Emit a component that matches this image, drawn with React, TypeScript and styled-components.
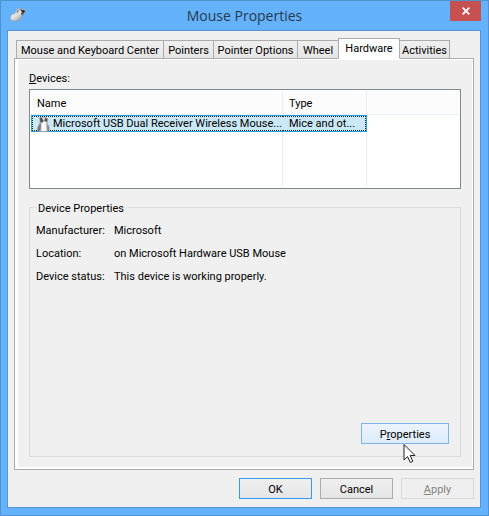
import React from 'react';
import styled, { createGlobalStyle, css } from 'styled-components';

const GlobalStyle = createGlobalStyle`
  *, *::before, *::after { box-sizing: border-box; }
  body { margin: 0; }
  body, button, table { font-family: Roboto, "Liberation Sans", Arial, sans-serif; font-size: 11px; line-height: 14px; color: #000; }
`;

const Window = styled.main`
  display: flex;
  flex-direction: column;
  min-height: 100vh;
  padding: 0 7px 7px 6px;
  background: #65b2fc;
  border: 1px solid #4e92cf;
`;

const TitleBar = styled.header`
  display: flex;
  align-items: flex-start;
  height: 29px;
`;

const TitleIcon = styled.svg`
  flex: none;
  width: 18px;
  height: 16px;
  margin: 6px 0 0 2px;
`;

const Title = styled.h1`
  flex: 1;
  margin: 0;
  padding: 4px 0 0 12px;
  font: 400 14px/22px "Open Sans", sans-serif;
  color: #25394d;
  text-align: center;
`;

const CloseButton = styled.button`
  display: grid;
  place-items: center;
  width: 31px;
  height: 20px;
  padding: 0;
  border: 0;
  background: #c75050;
`;

const Client = styled.div`
  display: flex;
  flex: 1;
  flex-direction: column;
  padding: 7px 6px 8px;
  background: #f0f0f0;
  border: 1px solid #5496d6;
`;

const TabList = styled.div`
  display: flex;
  align-items: flex-end;
  height: 21px;
  margin-bottom: -1px;
  padding-left: 2px;
`;

const Tab = styled.button<{ $width: number }>`
  width: ${p => p.$width}px;
  height: 19px;
  margin-right: -1px;
  padding: 2px 0 0;
  border: 1px solid #acacac;
  background: linear-gradient(#f0f0f0, #e5e5e5);
  text-align: center;
  white-space: nowrap;
  &[aria-selected='true'] {
    position: relative;
    height: 21px;
    padding-bottom: 1px;
    border-bottom-color: #fff;
    background: #fff;
  }
`;

const TabPanel = styled.section`
  display: flex;
  flex: 1;
  flex-direction: column;
  padding: 13px 12px 12px 14px;
  background: #f0f0f0;
  border: 1px solid #acacac;
  box-shadow: inset 3px 0 #fff, inset -1px 0 #fff, inset 0 1px #fff, inset 0 -2px #fff;
`;

const ListLabel = styled.div`
  height: 17px;
`;

const ListBox = styled.div`
  height: 100px;
  padding: 1px;
  border: 1px solid #828790;
  background: #fff;
`;

const DeviceTable = styled.table`
  width: 100%;
  height: 100%;
  table-layout: fixed;
  border-collapse: separate;
  border-spacing: 0;
`;

const NameCol = styled.col`width: 252px;`;
const TypeCol = styled.col`width: 84px;`;

const HeadCell = styled.th`
  height: 24px;
  padding: 3px 6px 0;
  border-right: 1px solid #e5f0fb;
  border-bottom: 1px solid #e5f0fb;
  background: #fcfcfc;
  font-weight: 400;
  text-align: left;
  &:last-child { border-right: 0; }
`;

const Selected = css`
  border-top: 1px solid #26a0da;
  border-bottom: 1px solid #26a0da;
  background: #cbe8f6;
`;

const RowCell = styled.td`
  height: 17px;
  padding: 0;
  white-space: nowrap;
  &:not(:last-child) { ${Selected} }
  &:first-child { border-left: 1px solid #26a0da; }
  &:nth-child(2) { border-right: 1px solid #26a0da; }
`;

const FocusArea = styled.div<{ $end?: boolean }>`
  display: flex;
  align-items: center;
  height: 15px;
  padding-top: 1px;
  padding-left: ${p => (p.$end ? 6 : 4)}px;
  border: 1px dotted #222;
  border-left-width: ${p => (p.$end ? 0 : 1)}px;
  border-right-width: ${p => (p.$end ? 1 : 0)}px;
`;

const DeviceIcon = styled.svg`
  flex: none;
  width: 14px;
  height: 15px;
  margin-right: 2px;
`;

const FillCell = styled.td`
  padding: 0;
  border-right: 1px solid #e5f0fb;
  &:last-child { border-right: 0; }
`;

const Group = styled.div`
  display: flex;
  flex: 1;
  flex-direction: column;
  margin-top: 18px;
  padding: 0 11px 12px 6px;
  border: 1px solid #dcdcdc;
`;

const GroupTitle = styled.div`
  align-self: flex-start;
  margin: -6px 0 8px;
  padding: 0 3px 0 2px;
  background: #f0f0f0;
`;

const Details = styled.dl`
  display: grid;
  grid-template-columns: 77px 1fr;
  row-gap: 9px;
  margin: 0;
`;

const Term = styled.dt`
  white-space: nowrap;
`;

const Value = styled.dd`
  margin: 0;
  padding-left: 1px;
`;

const GroupActions = styled.div`
  position: relative;
  display: flex;
  justify-content: flex-end;
  margin-top: auto;
`;

const PushButton = styled.button<{ $kind?: 'default' | 'hot'; $width: number }>`
  width: ${p => p.$width}px;
  height: 21px;
  padding: 2px 0 0;
  border: 1px solid ${p => (p.$kind === 'default' ? '#3399ff' : p.$kind === 'hot' ? '#7eb4ea' : '#acacac')};
  background: ${p => (p.$kind === 'hot' ? 'linear-gradient(#ecf4fc, #dcecfc)' : 'linear-gradient(#f0f0f0, #e5e5e5)')};
  &:disabled {
    border-color: #d9d9d9;
    background: #efefef;
    color: #838383;
  }
`;

const Pointer = styled.svg`
  position: absolute;
  top: 20px;
  right: 33px;
  width: 13px;
  height: 21px;
`;

const Footer = styled.footer`
  display: flex;
  justify-content: flex-end;
  gap: 8px;
  margin-top: 8px;
`;

const tabs = [
  { label: 'Mouse and Keyboard Center', width: 148 },
  { label: 'Pointers', width: 51 },
  { label: 'Pointer Options', width: 85 },
  { label: 'Wheel', width: 42 },
  { label: 'Hardware', width: 62 },
  { label: 'Activities', width: 51 },
];

const details = [
  ['Manufacturer:', 'Microsoft'],
  ['Location:', 'on Microsoft Hardware USB Mouse'],
  ['Device status:', 'This device is working properly.'],
];

export default function App() {
  return (
    <>
      <GlobalStyle />
      <Window>
        <TitleBar>
          <TitleIcon viewBox="0 0 18 16" aria-hidden="true">
            <defs>
              <linearGradient id="shell" x1="0" y1="0" x2="1" y2="1">
                <stop offset="0" stopColor="#fff" />
                <stop offset=".5" stopColor="#dcdcdc" />
                <stop offset="1" stopColor="#777" />
              </linearGradient>
            </defs>
            <path d="M1.500 10 C2 8 4 6.500 6 6.500 L7 3.500 L9 1.500 L12 2 L16 2.500 L16.500 4 L13 8 C13 11 10 14 6 14 C3 14 1 12.500 1.500 10Z" fill="url(#shell)" stroke="#9a9a9a" strokeWidth=".5" />
            <path d="M11.500 3 L15.500 3 L16 4.500 L13 8.500 L12 7 L13 5Z" fill="#333" />
            <path d="M10 2 L14 2.500 L11.500 3.500Z" fill="#777" />
            <path d="M7 6 L8.500 2.500 L11 4 L11.500 8 L9 8Z" fill="#ddd" />
            <path d="M7 5 L9 2 L10 3 L8.500 6Z" fill="#888" />
            <path d="M12 7 L14 6 L13 8Z" fill="#b68a45" />
          </TitleIcon>
          <Title>Mouse Properties</Title>
          <CloseButton aria-label="Close">
            <svg width="8" height="8" viewBox="0 0 8 8">
              <path d="M.7.7 7.300 7.300M7.300.7.7 7.300" stroke="#fff" strokeWidth="1.800" />
            </svg>
          </CloseButton>
        </TitleBar>
        <Client>
          <TabList role="tablist">
            {tabs.map(tab => (
              <Tab key={tab.label} role="tab" aria-selected={tab.label === 'Hardware'} $width={tab.width}>
                {tab.label}
              </Tab>
            ))}
          </TabList>
          <TabPanel role="tabpanel" aria-label="Hardware">
            <ListLabel id="devices-label"><u>D</u>evices:</ListLabel>
            <ListBox>
              <DeviceTable aria-labelledby="devices-label">
                <colgroup><NameCol /><TypeCol /><col /></colgroup>
                <thead>
                  <tr><HeadCell>Name</HeadCell><HeadCell>Type</HeadCell><HeadCell /></tr>
                </thead>
                <tbody>
                  <tr aria-selected="true">
                    <RowCell>
                      <FocusArea>
                        <DeviceIcon viewBox="0 0 14 15" aria-hidden="true">
                          <defs>
                            <linearGradient id="body">
                              <stop offset="0" stopColor="#555" />
                              <stop offset=".4" stopColor="#fff" />
                              <stop offset=".7" stopColor="#f4f4f4" />
                              <stop offset="1" stopColor="#666" />
                            </linearGradient>
                          </defs>
                          <path d="M3 1 L9 0 L10.500 2 L10 6 C12 9 13 12 11.500 14.500 L1 14.500 C0 11 2 8 3 6Z" fill="url(#body)" stroke="#888" strokeWidth=".6" />
                          <path d="M2.500 1 L4.500 .5 L6.500 3 L8.500 .5 L10.500 2.500 L9.500 5 L7 4 L5 6 L3.500 5Z" fill="#555" />
                          <path d="M5.500 1.500 L8 1 L7 5Z" fill="#ddd" />
                          <path d="M2.500 8 L4 6 L3.500 13 L1 14Z" fill="#777" />
                          <path d="M9.500 7 L11 9 L11.500 13 L10 14Z" fill="#999" />
                        </DeviceIcon>
                        Microsoft USB Dual Receiver Wireless Mouse...
                      </FocusArea>
                    </RowCell>
                    <RowCell><FocusArea $end>Mice and ot...</FocusArea></RowCell>
                    <RowCell />
                  </tr>
                  <tr aria-hidden="true"><FillCell /><FillCell /><FillCell /></tr>
                </tbody>
              </DeviceTable>
            </ListBox>
            <Group role="group" aria-labelledby="properties-label">
              <GroupTitle id="properties-label">Device Properties</GroupTitle>
              <Details>
                {details.map(([term, value]) => (
                  <React.Fragment key={term}>
                    <Term>{term}</Term>
                    <Value>{value}</Value>
                  </React.Fragment>
                ))}
              </Details>
              <GroupActions>
                <PushButton $kind="hot" $width={88}>P<u>r</u>operties</PushButton>
                <Pointer viewBox="0 0 13 21" aria-hidden="true">
                  <path d="M1 1.500V17L4.500 13.500L7.300 19.500L9.800 18.300L7.200 12.500H12Z" fill="#fff" stroke="#222" strokeWidth="1" />
                </Pointer>
              </GroupActions>
            </Group>
          </TabPanel>
          <Footer>
            <PushButton $kind="default" $width={73}>OK</PushButton>
            <PushButton $width={73}>Cancel</PushButton>
            <PushButton $width={73} disabled><u>A</u>pply</PushButton>
          </Footer>
        </Client>
      </Window>
    </>
  );
}
